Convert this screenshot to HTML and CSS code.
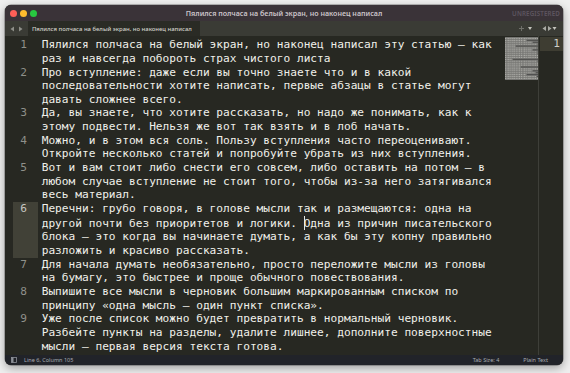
FILE: index.html
```html
<!DOCTYPE html>
<html lang="ru">
<head>
<meta charset="utf-8">
<title>Sublime Text</title>
<link rel="stylesheet" href="styles.css">
</head>
<body>
<div class="window">
  <div class="titlebar">
    <div class="lights"><span class="l red"></span><span class="l yellow"></span><span class="l green"></span></div>
    <div class="title">Пялился полчаса на белый экран, но наконец написал</div>
    <div class="unreg">UNREGISTERED</div>
  </div>
  <div class="tabbar">
    <div class="nav">
      <svg width="14" height="6" viewBox="0 0 14 6"><path d="M4 0.5 L0.5 3 L4 5.5 Z" fill="#8e8f89"/><path d="M9 0.5 L12.5 3 L9 5.5 Z" fill="#8e8f89"/></svg>
    </div>
    <div class="tab"><span class="tabname">Пялился полчаса на белый экран, но наконец написал</span><span class="dot"></span></div>
    <div class="spacer"></div>
    <svg class="tools" width="43" height="15" viewBox="0 0 43 15">
      <path d="M4.5 5 V10 M2 7.5 H7" stroke="#6f706a" stroke-width="1"/>
      <path d="M11 6 L15 6 L13 9 Z" fill="#c4c4bd"/>
      <path d="M29 5 L25.5 7.5 L29 10 Z" fill="#a9aaa4"/>
      <path d="M31 5 L34.5 7.5 L31 10 Z" fill="#a9aaa4"/>
      <path d="M35.5 6 L39.5 6 L37.5 9 Z" fill="#c4c4bd"/>
    </svg>
  </div>
  <div class="main">
    <div class="editor">
      <div class="code">
        <div class="ln"><div class="gut">1</div><div class="txt"><div>Пялился полчаса на белый экран, но наконец написал эту статью — как</div><div>раз и навсегда побороть страх чистого листа</div></div></div>
        <div class="ln"><div class="gut">2</div><div class="txt"><div>Про вступление: даже если вы точно знаете что и в какой</div><div>последовательности хотите написать, первые абзацы в статье могут</div><div>давать сложнее всего.</div></div></div>
        <div class="ln"><div class="gut">3</div><div class="txt"><div>Да, вы знаете, что хотите рассказать, но надо же понимать, как к</div><div>этому подвести. Нельзя же вот так взять и в лоб начать.</div></div></div>
        <div class="ln"><div class="gut">4</div><div class="txt"><div>Можно, и в этом вся соль. Пользу вступления часто переоценивают.</div><div>Откройте несколько статей и попробуйте убрать из них вступления.</div></div></div>
        <div class="ln"><div class="gut">5</div><div class="txt"><div>Вот и вам стоит либо снести его совсем, либо оставить на потом — в</div><div>любом случае вступление не стоит того, чтобы из-за него затягивался</div><div>весь материал.</div></div></div>
        <div class="ln"><div class="gut cur">6</div><div class="txt"><div>Перечни: грубо говоря, в голове мысли так и размещаются: одна на</div><div>другой почти без приоритетов и логики. <span class="caret"></span>Одна из причин писательского</div><div>блока — это когда вы начинаете думать, а как бы эту копну правильно</div><div>разложить и красиво рассказать.</div></div></div>
        <div class="ln"><div class="gut">7</div><div class="txt"><div>Для начала думать необязательно, просто переложите мысли из головы</div><div>на бумагу, это быстрее и проще обычного повествования.</div></div></div>
        <div class="ln"><div class="gut">8</div><div class="txt"><div>Выпишите все мысли в черновик большим маркированным списком по</div><div>принципу «одна мысль — один пункт списка».</div></div></div>
        <div class="ln"><div class="gut">9</div><div class="txt"><div>Уже после список можно будет превратить в нормальный черновик.</div><div>Разбейте пункты на разделы, удалите лишнее, дополните поверхностные</div><div>мысли — первая версия текста готова.</div></div></div>
      </div>
      <div class="minimap">
        <svg width="33" height="43" viewBox="0 0 33 43">
          <rect width="33" height="43" fill="#767673"/>
          <g stroke="#a8a8a3" stroke-width="1.1" stroke-dasharray="1.2 0.6 0.8 0.5 1.5 0.7">
            <path d="M0 1.5H33 M0 3.4H21 M0 5.3H27 M0 7.2H32 M0 9.1H10 M0 11H31 M0 12.9H27 M0 14.8H32 M0 16.7H32 M0 18.6H33 M0 20.5H33 M0 22.4H7 M0 24.3H32 M0 26.2H33 M0 28.1H33 M0 30H15 M0 31.9H33 M0 33.8H27 M0 35.7H30 M0 37.6H21 M0 39.5H31 M0 41.4H33"/>
          </g>
          <g stroke="#4a4a47" stroke-width="0.9">
            <path d="M22 3.4H33 M28 5.3H33 M11 9.1H33 M28 12.9H33 M8 22.4H33 M16 30H33 M28 33.8H33 M31 35.7H33 M22 37.6H33 M32 39.5H33"/>
          </g>
        </svg>
      </div>
    </div>
    <div class="pane2"><div class="p2row">1</div></div>
  </div>
  <div class="status">
    <svg class="sicon" width="6" height="6" viewBox="0 0 6 6"><rect x="0.5" y="0.5" width="5" height="5" fill="none" stroke="#8d9198" stroke-width="0.8"/><rect x="0.5" y="0.5" width="2" height="5" fill="#8d9198"/></svg>
    <span class="stext">Line 6, Column 105</span>
    <span class="spacer"></span>
    <span class="stext">Tab Size: 4</span>
    <span class="stext lang">Plain Text</span>
  </div>
</div>
</body>
</html>
```

FILE: styles.css
```css
html, body {
  margin: 0;
}
body {
  background: #efefef;
  padding: 5px 7px 0 5px;
  height: 373px;
  box-sizing: border-box;
  overflow: hidden;
}
.window {
  width: 558px;
  height: 360px;
  border-radius: 6px;
  overflow: hidden;
  box-shadow: 0 3px 10px rgba(0,0,0,0.35), 0 0 0 0.5px rgba(0,0,0,0.45);
  display: flex;
  flex-direction: column;
  background: #272822;
}
.titlebar {
  height: 16px;
  flex: none;
  background: #3a3338;
  display: grid;
  grid-template-columns: 1fr auto 1fr;
  align-items: center;
}
.lights {
  display: flex;
  gap: 3px;
  padding-left: 4.5px;
}
.l {
  width: 7px;
  height: 7px;
  border-radius: 50%;
}
.red { background: #fe5f57; }
.yellow { background: #febc2e; }
.green { background: #28c840; }
.title {
  font-family: "Noto Sans", "Liberation Sans", sans-serif;
  font-weight: 600;
  font-size: 7.1px;
  color: #cbc3c8;
  white-space: nowrap;
}
.unreg {
  justify-self: end;
  padding-right: 3px;
  font-family: "Noto Sans", "Liberation Sans", sans-serif;
  font-weight: 600;
  font-size: 6.2px;
  color: #5e5660;
  letter-spacing: 0.15px;
}
.tabbar {
  height: 15px;
  flex: none;
  background: #3a3b35;
  display: flex;
  align-items: stretch;
}
.nav {
  width: 23px;
  display: flex;
  align-items: center;
  justify-content: center;
}
.tab {
  width: 172px;
  background: #2a2b25;
  display: flex;
  align-items: center;
  padding-left: 4px;
  box-sizing: border-box;
}
.tabname {
  font-family: "Noto Sans", "Liberation Sans", sans-serif;
  font-size: 5.9px;
  font-weight: 500;
  color: #d2d2ca;
  white-space: nowrap;
}
.dot {
  width: 3.5px;
  height: 3.5px;
  border-radius: 50%;
  background: #a6d62e;
  margin-left: 9px;
}
.spacer {
  flex: 1;
}
.tools {
  margin-right: 3px;
}
.main {
  flex: 1;
  display: flex;
  min-height: 0;
}
.editor {
  flex: 1;
  display: flex;
}
.code {
  flex: 1;
  padding-top: 2.2px;
  font-family: "DejaVu Sans Mono", monospace;
  font-size: 11.16px;
  line-height: 13.65px;
  color: #f0f0ea;
}
.ln {
  display: flex;
}
.gut {
  margin-left: 8px;
  width: 25px;
  padding-right: 11px;
  box-sizing: border-box;
  text-align: right;
  color: #8f908a;
  flex: none;
}
.gut.cur {
  background: #414137;
  color: #c6c6c0;
}
.txt {
  padding-left: 3.7px;
  white-space: pre;
}
.caret {
  display: inline-block;
  width: 1px;
  height: 14px;
  background: #e6e6e0;
  vertical-align: -3px;
  margin-right: -1px;
}
.minimap {
  width: 33px;
  padding-top: 1px;
  flex: none;
}
.minimap svg {
  display: block;
}
.pane2 {
  width: 25px;
  flex: none;
  border-left: 1px solid #3e3f39;
  box-sizing: border-box;
  padding-left: 1px;
  padding-top: 1px;
}
.p2row {
  height: 14px;
  background: #3e3d32;
  text-align: right;
  padding-right: 3px;
  font-family: "DejaVu Sans Mono", monospace;
  font-size: 11.16px;
  line-height: 14px;
  color: #cfcfc9;
}
.status {
  height: 10px;
  flex: none;
  background: #212329;
  display: flex;
  align-items: center;
  padding-left: 6px;
  padding-right: 15px;
}
.sicon {
  margin-right: 7px;
}
.stext {
  font-family: "Noto Sans", "Liberation Sans", sans-serif;
  font-size: 5.5px;
  color: #a8acb2;
  white-space: nowrap;
}
.lang {
  margin-left: 24px;
}
```
